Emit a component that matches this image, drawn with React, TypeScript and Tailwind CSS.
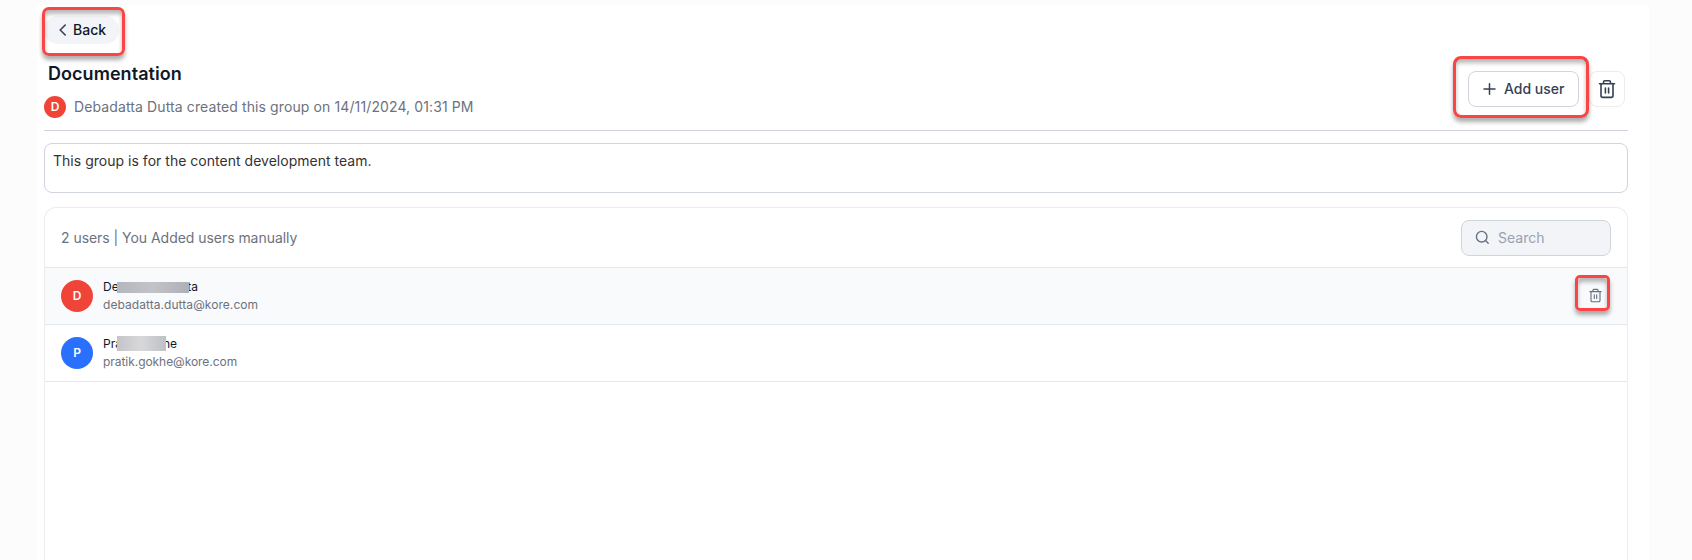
import React from 'react';

function Trash({ size, className }: { size: number; className: string }) {
  return (
    <svg width={size} height={size} viewBox="0 0 18 20" fill="none" stroke="currentColor" strokeLinecap="round" strokeLinejoin="round" className={className}>
      <path d="M1.5 4.8h15M5.5 4.8V3.2Q5.5 1.8 6.9 1.8h4.2Q12.5 1.8 12.5 3.2v1.6M3 4.8v11.8q0 1.8 1.8 1.8h8.4q1.8 0 1.8-1.8V4.8M7.4 9v5M10.6 9v5" />
    </svg>
  );
}

function Callout({ className }: { className: string }) {
  return (
    <div className={`pointer-events-none absolute z-10 border-3 border-[#fb4545] ${className}`}>
      <div className="h-full w-full rounded-[4px] shadow-[inset_0_4px_4px_rgba(0,0,0,0.28)]" />
    </div>
  );
}

interface User {
  initial: string;
  color: string;
  start: string;
  end: string;
  mask: string;
  email: string;
  emailClass: string;
  active?: boolean;
}

const users: User[] = [
  { initial: 'D', color: 'bg-[#f04438]', start: 'De', end: 'ta', mask: 'left-[14px] top-[4px] h-[11px] w-[72px] bg-linear-to-r from-[#b5b7bf] via-[#c2c3c7] to-[#aeb0b8]', email: 'debadatta.dutta@kore.com', emailClass: 'tracking-[0.06px]', active: true },
  { initial: 'P', color: 'bg-[#2970ff]', start: 'Pra', end: 'he', mask: 'left-[14px] top-[1px] h-[15px] w-[49px] bg-linear-to-r from-[#c4c5c9] via-[#d8d8da] to-[#bfc0c4]', email: 'pratik.gokhe@kore.com', emailClass: 'tracking-[-0.05px]' },
];

function UserRow({ user }: { user: User }) {
  return (
    <div className={`flex h-[57px] items-center border-b border-[#e4e7ec] pl-4 pr-6 ${user.active ? 'bg-[#f9fafb]' : 'bg-white'}`}>
      <div className={`flex size-8 items-center justify-center rounded-full text-[12px] font-semibold text-white ${user.color}`}>{user.initial}</div>
      <div className="ml-[10px] flex-1 text-[12px] leading-[18px]">
        <div className={`relative flex justify-between text-[#101828] ${user.active ? 'w-[95px]' : 'w-[74px]'}`}>
          <span>{user.start}</span>
          <span>{user.end}</span>
          <div className={`absolute ${user.mask}`} />
        </div>
        <div className={`text-[#6b7280] ${user.emailClass}`}>{user.email}</div>
      </div>
      {user.active && (
        <div className="relative mb-px">
          <Callout className="-left-[13px] -top-[13px] h-[36px] w-[35px] rounded-[5px] shadow-[0_4px_4px_rgba(0,0,0,0.32)]" />
          <Trash size={15} className="stroke-[1.5] text-[#667085]" />
        </div>
      )}
    </div>
  );
}

export default function App() {
  return (
    <div className="h-[560px] overflow-hidden bg-[#fcfcfc] pl-[37px] pr-[43px] pt-[5px] font-['Inter',sans-serif] text-[14px]">
      <main className="flex h-[555px] flex-col bg-white pl-[7px] pr-[21px] pt-[11px]">
        <div className="relative w-[75px]">
          <button className="flex h-7 w-full items-center rounded-full bg-[#f2f4f7] pl-[15px] font-medium text-[#101828]">
            <svg width="8" height="12" viewBox="0 0 8 12" fill="none" stroke="#344054" strokeWidth="1.6" strokeLinecap="round" strokeLinejoin="round"><path d="M6.2 1 1.2 6l5 5" /></svg>
            <span className="mb-[2px] ml-[6px]">Back</span>
          </button>
          <Callout className="-left-[2px] -top-[9px] h-[49px] w-[83px] rounded-[7px] shadow-[0_4px_4px_rgba(0,0,0,0.32)]" />
        </div>
        <header className="flex h-[87px] shrink-0 justify-between border-b border-[#d0d5dd]">
          <div className="pt-[16px]">
            <h1 className="pl-1 text-[18px] font-semibold leading-[28px] tracking-[0.05px] text-[#101828]">Documentation</h1>
            <div className="mt-[8px] flex items-center">
              <span className="flex size-[22px] items-center justify-center rounded-full bg-[#f04438] text-[12px] font-semibold text-white">D</span>
              <span className="ml-2 leading-5 tracking-[0.11px] text-[#6b7280]">Debadatta Dutta created this group on 14/11/2024, 01:31 PM</span>
            </div>
          </div>
          <div className="flex gap-[10px] pr-[3px] pt-[27px]">
            <div className="relative">
              <button className="flex h-9 w-[111px] items-center rounded-lg border border-[#d0d5dd] pl-[14px] font-medium text-[#344054]">
                <svg width="13" height="12" viewBox="0 0 13 12" stroke="#344054" strokeWidth="1.5" strokeLinecap="round"><path d="M6.5.8v10.4M1 6h11" /></svg>
                <span className="mb-[2px] ml-[8px] whitespace-nowrap">Add user</span>
              </button>
              <Callout className="-left-[15px] -top-[15px] h-[62px] w-[136px] rounded-[8px] shadow-[0_4px_4px_rgba(0,0,0,0.32)]" />
            </div>
            <button className="flex h-9 w-9 items-center justify-center rounded-lg border border-[#eaecf0]">
              <Trash size={20} className="stroke-[1.6] text-[#344054]" />
            </button>
          </div>
        </header>
        <div className="mt-3 h-[50px] shrink-0 rounded-lg border border-[#d0d5dd] pl-[8px] pt-[7px] leading-[20px] tracking-[0.02px] text-[#333333]">This group is for the content development team.</div>
        <section className="mt-[14px] flex-1 rounded-t-xl border border-b-0 border-[#eaecf0]">
          <div className="flex h-[60px] items-center justify-between border-b border-[#e4e7ec] pl-4 pr-4">
            <p className="tracking-[-0.04px] text-[#6b7280]">2 users | You Added users manually</p>
            <div className="flex h-9 w-[150px] items-center rounded-lg border border-[#d0d5dd] bg-[#f2f4f7] pl-[13px] text-[#98a2b3]">
              <svg width="16" height="16" viewBox="0 0 16 16" fill="none" stroke="#667085" strokeWidth="1.4" strokeLinecap="round"><circle cx="6.7" cy="6.7" r="5.3" /><path d="m10.6 10.6 2.6 2.6" /></svg>
              <span className="ml-[7px]">Search</span>
            </div>
          </div>
          {users.map((user) => <UserRow key={user.email} user={user} />)}
        </section>
      </main>
    </div>
  );
}
